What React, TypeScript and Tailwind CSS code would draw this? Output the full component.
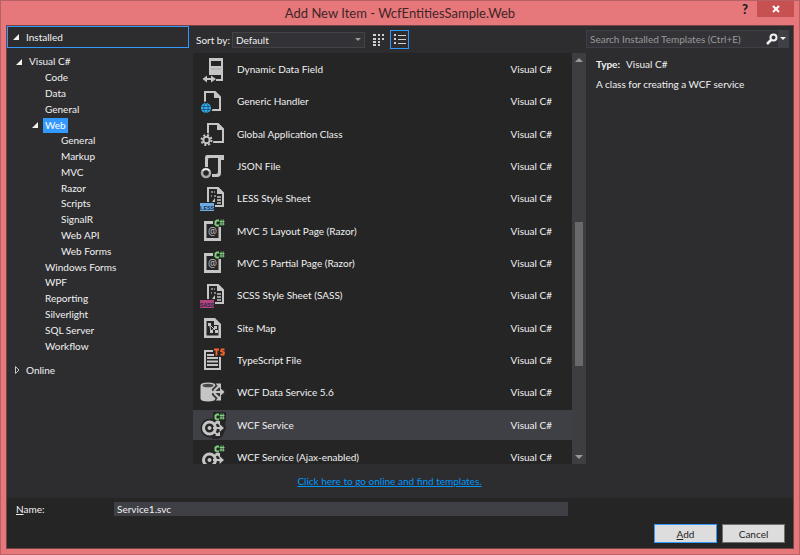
import React, { useState } from "react";

const INK = "#c5c5c5";
const BACK = "#252526";

function Page({ x, y }: { x: number; y: number }) {
  return (
    <g transform={`translate(${x} ${y})`}>
      <path d="M1 1h10l5 5v13H1z" fill={BACK} stroke={INK} strokeWidth="2" />
      <path d="M10 0l7 7h-7z" fill={INK} />
    </g>
  );
}

function CSharp() {
  return (
    <g fill="none" stroke="#7fd17f">
      <path d="M21 5.500h-2l-1.500 1v3l1.500 1h2" strokeWidth="2" />
      <path d="M21.500 6.500h5M21.500 9h5M23 4.500v6M25.200 4.500v6" />
    </g>
  );
}

function DynamicIcon() {
  return (
    <>
      <path fill={INK} fillRule="evenodd" d="M11 5h14v23h-7v-2h5v-4H11zM13 8v5h10V8z" />
      <path d="M13 16h10" stroke="#a5a5a5" />
      <path fill={INK} d="M4.500 26l4.500-3.500v2.500h4v-2.500l5 3.500-5 3.500v-2.500h-4v2.500z" />
    </>
  );
}

function HandlerIcon() {
  return (
    <>
      <Page x={6} y={6} />
      <circle cx="8" cy="23" r="6.500" fill={BACK} />
      <circle cx="8" cy="23" r="5" fill="#35b0f0" />
      <g fill="none" stroke="#1b4a6b" strokeWidth=".8">
        <ellipse cx="8" cy="23" rx="2.200" ry="4.500" />
        <path d="M3.500 21.500h9M3.500 24.500h9" />
      </g>
    </>
  );
}

function GlobalIcon() {
  return (
    <>
      <Page x={9} y={5} />
      <circle cx="8.500" cy="22" r="7" fill={BACK} />
      <circle cx="8.500" cy="22" r="3.200" fill="none" stroke={INK} strokeWidth="2" />
      <circle cx="8.500" cy="22" r="5" fill="none" stroke={INK} strokeWidth="2" strokeDasharray="2 1.927" />
    </>
  );
}

function JsonIcon() {
  return (
    <>
      <path fill={INK} d="M9 5h17v5h-3v13q0 4-4 4h-5v-3h4q2 0 2-2V8H11q-1 0-1 2v7H7V8q0-3 2-3z" />
      <circle cx="8" cy="23" r="6" fill={BACK} />
      <circle cx="8" cy="23" r="4" fill="none" stroke="#a8a8a8" strokeWidth="2.500" />
      <path d="M4.500 21a4 4 0 0 1 7 0" fill="none" stroke="#f1f1f1" strokeWidth="1.500" />
    </>
  );
}

function SheetIcon({ tag, color }: { tag: string; color: string }) {
  return (
    <>
      <Page x={9} y={5} />
      <path d="M13 9h2v2h-2zM16 9h1v2h-1zM13 13h1v2h-1zM16 13h2v2h-2z" fill={INK} opacity=".6" />
      <path d="M19 15h4M19 18h4M19 21h4" stroke={INK} strokeWidth="1.500" />
      <path d="M14 20l3-4v4z" fill={INK} />
      <rect x="1" y="20" width="16" height="10" fill={BACK} />
      <rect x="2" y="21" width="14" height="8" fill={color} />
      <text x="9" y="27.500" fontSize="6" fontWeight="700" textAnchor="middle" fill="#1b2b45" fontFamily="'Liberation Mono', monospace">
        {tag}
      </text>
    </>
  );
}

function RazorIcon() {
  return (
    <>
      <path fill={INK} fillRule="evenodd" d="M6 6h17v20H6zM8.500 9v14h12V9z" />
      <rect x="15" y="3" width="14" height="9" fill={BACK} />
      <CSharp />
      <text x="14.500" y="20" fontSize="10" textAnchor="middle" fill={INK} fontFamily="'Open Sans', sans-serif">
        @
      </text>
    </>
  );
}

function SiteMapIcon() {
  return (
    <>
      <path fill={INK} fillRule="evenodd" d="M6 6h11l6 6v14H6zM8.500 9v14.500h12V13H16V9z" />
      <path d="M10 11h3v3h-3zM12 18h3v3h-3zM17 18h3v3h-3zM16 14h3v3h-3z" fill={INK} />
      <path d="M11.500 12l1.500 7M12 13l7 7M13.500 19l4-4" stroke={INK} fill="none" />
    </>
  );
}

function TypeScriptIcon() {
  return (
    <>
      <path d="M15 7H7v18h15V13" fill="none" stroke={INK} strokeWidth="2" />
      <path d="M9 11h7M9 14h11M9 17.500h11M9 21h11" stroke={INK} strokeWidth="2" />
      <path d="M16 5.500h5M18.500 5v6.500M26.500 5.500H23.500L23 7l3 1.500-.5 2H22.500" fill="none" stroke="#f5642c" strokeWidth="1.800" />
    </>
  );
}

function DataServiceIcon() {
  return (
    <>
      <path d="M2.500 9.500v13q0 3 7.500 3t7.500-3v-13q0-3-7.500-3t-7.500 3z" fill={INK} />
      <ellipse cx="10" cy="9.500" rx="5.500" ry="1.800" fill="#4a4a4a" />
      <path d="M14 16h12M15.500 15l6-6M15.500 17l6 6" stroke="#3a3a3b" strokeWidth="5" />
      <path d="M14 16h9M16 15l5-5M16 17l5 5" stroke={INK} strokeWidth="2" />
      <path fill={INK} d="M22 12l4.500 4-4.500 4zM17.500 7.500h5.500v5.500zM17.500 24.500h5.500v-5.500z" />
    </>
  );
}

function ServiceIcon() {
  return (
    <>
      <circle cx="12" cy="19" r="9.500" fill={BACK} />
      <path d="M15 3h13v9l-1 3 1 4-4 9-4 2h-6z" fill={BACK} />
      <circle cx="11.500" cy="19" r="6" fill="none" stroke={INK} strokeWidth="3" />
      <circle cx="11.500" cy="19" r="2" fill={INK} />
      <path d="M15 19h8M16 15l4-2M16 23l4 3" stroke={INK} strokeWidth="2" />
      <path fill={INK} d="M21.500 15l4.500 4-4.500 4zM17 12h5v5zM17 27h5v-5z" />
      <CSharp />
    </>
  );
}

const templates: { name: string; icon: React.ReactNode }[] = [
  { name: "Dynamic Data Field", icon: <DynamicIcon /> },
  { name: "Generic Handler", icon: <HandlerIcon /> },
  { name: "Global Application Class", icon: <GlobalIcon /> },
  { name: "JSON File", icon: <JsonIcon /> },
  { name: "LESS Style Sheet", icon: <SheetIcon tag="LESS" color="#6cace4" /> },
  { name: "MVC 5 Layout Page (Razor)", icon: <RazorIcon /> },
  { name: "MVC 5 Partial Page (Razor)", icon: <RazorIcon /> },
  { name: "SCSS Style Sheet (SASS)", icon: <SheetIcon tag="SASS" color="#b3427c" /> },
  { name: "Site Map", icon: <SiteMapIcon /> },
  { name: "TypeScript File", icon: <TypeScriptIcon /> },
  { name: "WCF Data Service 5.6", icon: <DataServiceIcon /> },
  { name: "WCF Service", icon: <ServiceIcon /> },
  { name: "WCF Service (Ajax-enabled)", icon: <ServiceIcon /> },
];

const tree: { label: string; level: number; open?: boolean; selected?: boolean }[] = [
  { label: "Visual C#", level: 0, open: true },
  { label: "Code", level: 1 },
  { label: "Data", level: 1 },
  { label: "General", level: 1 },
  { label: "Web", level: 1, open: true, selected: true },
  { label: "General", level: 2 },
  { label: "Markup", level: 2 },
  { label: "MVC", level: 2 },
  { label: "Razor", level: 2 },
  { label: "Scripts", level: 2 },
  { label: "SignalR", level: 2 },
  { label: "Web API", level: 2 },
  { label: "Web Forms", level: 2 },
  { label: "Windows Forms", level: 1 },
  { label: "WPF", level: 1 },
  { label: "Reporting", level: 1 },
  { label: "Silverlight", level: 1 },
  { label: "SQL Server", level: 1 },
  { label: "Workflow", level: 1 },
];

const indents = ["pl-2", "pl-6", "pl-10"];

function Expanded() {
  return (
    <svg className="h-2 w-2 shrink-0" viewBox="0 0 8 8" aria-hidden="true">
      <path d="M7 1v6H1z" fill="#f1f1f1" />
    </svg>
  );
}

export default function App() {
  const [fileName, setFileName] = useState("Service1.svc");
  const [query, setQuery] = useState("");

  return (
    <div className="flex h-screen flex-col border border-[#b86063] bg-[#e6787b] px-[5px] pb-[5px] font-[Lato,'Open_Sans',sans-serif] text-[10px] leading-4 text-[#f1f1f1]">
      <header className="grid h-6 shrink-0 grid-cols-[1fr_auto_1fr] items-start">
        <span />
        <h1 className="text-[13px] leading-6 text-[#3f2528]">Add New Item - WcfEntitiesSample.Web</h1>
        <div className="flex justify-end">
          <button type="button" aria-label="Help" className="h-4 w-6 text-[13px] font-black leading-4 text-[#1e1e1e]">
            ?
          </button>
          <button type="button" aria-label="Close" className="flex h-4 w-[37px] items-center justify-center bg-[#c75050]">
            <svg className="h-2 w-2" viewBox="0 0 8 8" aria-hidden="true">
              <path d="M1 1l6 6M7 1L1 7" stroke="#fff" strokeWidth="2" />
            </svg>
          </button>
        </div>
      </header>

      <div className="flex min-h-0 flex-1 flex-col border border-[#7a4245] bg-[#2d2d30]">
        <main className="flex min-h-0 flex-1">
          <nav aria-label="Categories" className="flex w-[186px] shrink-0 flex-col">
            <button type="button" className="mr-1 flex h-[22px] shrink-0 items-center gap-1.5 border border-[#3399ff] px-1">
              <Expanded />
              <span>Installed</span>
            </button>
            <ul className="mt-1.5 grid h-[300px] shrink-0 grid-rows-[repeat(19,1fr)] leading-[15px]">
              {tree.map((node, i) => (
                <li key={i} className={`flex items-center ${indents[node.level]}`}>
                  <span className="flex w-3 shrink-0">{node.open && <Expanded />}</span>
                  <button
                    type="button"
                    className={node.selected ? "bg-[#3399ff] px-0.5 text-white" : "px-0.5"}
                  >
                    {node.label}
                  </button>
                </li>
              ))}
            </ul>
            <button type="button" className="mt-2 flex items-center gap-[5px] px-1.5">
              <svg className="h-2 w-2" viewBox="0 0 8 8" aria-hidden="true">
                <path d="M2.500 .500v7L6 4z" fill="none" stroke="#c5c5c5" />
              </svg>
              <span>Online</span>
            </button>
          </nav>

          <section className="flex min-w-0 flex-1 flex-col">
            <div className="flex h-[27px] shrink-0 items-center pl-[3px]">
              <label htmlFor="sort" className="w-9 whitespace-nowrap">
                Sort by:
              </label>
              <div className="relative">
                <select
                  id="sort"
                  className="block h-4 w-[133px] appearance-none border border-[#434346] bg-[#333337] pl-[3px] leading-3 text-[#f1f1f1]"
                >
                  <option>Default</option>
                </select>
                <svg className="pointer-events-none absolute right-1 top-1.5 h-1 w-1.5" viewBox="0 0 6 4" aria-hidden="true">
                  <path d="M0 0h6L3 3z" fill="#999" />
                </svg>
              </div>
              <button type="button" aria-label="Small icons" className="ml-1.5 flex h-5 w-4 items-center justify-center">
                <svg className="h-3.5 w-3" viewBox="0 0 12 14" aria-hidden="true">
                  <path
                    fill="#d0d0d0"
                    d="M0 1h3v2H0zM5 1h2v2H5zM9 1h2v2H9zM0 5h3v2H0zM5 5h2v2H5zM9 5h2v2H9zM0 8h3v2H0zM5 8h2v2H5zM0 11h3v2H0zM5 11h2v2H5z"
                  />
                </svg>
              </button>
              <button type="button" aria-label="List" aria-pressed="true" className="ml-[3px] flex h-[19px] w-[19px] items-center justify-center border border-[#3399ff]">
                <svg className="h-[13px] w-[13px]" viewBox="0 0 13 13" aria-hidden="true">
                  <path fill="#d0d0d0" d="M1 1h2v2H1zM1 5h2v2H1zM1 9h2v2H1zM5 2h8v1H5zM5 6h8v1H5zM5 10h8v1H5z" />
                </svg>
              </button>
            </div>

            <div className="flex min-h-0 flex-1">
              <div className="min-w-0 flex-1 overflow-hidden bg-[#252526]">
                <ul className="grid h-[420px] grid-rows-[repeat(13,1fr)]">
                  {templates.map((t) => (
                    <li key={t.name} className="flex items-center">
                      <button
                        type="button"
                        className={`flex h-[30px] w-full items-center pl-[5px] pr-5 text-left ${
                          t.name === "WCF Service" ? "bg-[#3f3f46]" : ""
                        }`}
                      >
                        <svg className="h-8 w-8 shrink-0" viewBox="0 0 32 32" aria-hidden="true">
                          {t.icon}
                        </svg>
                        <span className="ml-[7px] flex-1">{t.name}</span>
                        <span>Visual C#</span>
                      </button>
                    </li>
                  ))}
                </ul>
              </div>
              <div className="flex w-[14px] shrink-0 flex-col items-center bg-[#3e3e42] py-1" aria-hidden="true">
                <svg className="h-1.5 w-2 shrink-0" viewBox="0 0 8 6">
                  <path d="M0 5h8L4 1z" fill="#999" />
                </svg>
                <div className="flex w-2 flex-1 flex-col">
                  <div className="flex-[159]" />
                  <div className="flex-[143] bg-[#686868]" />
                  <div className="flex-[88]" />
                </div>
                <svg className="h-1.5 w-2 shrink-0" viewBox="0 0 8 6">
                  <path d="M0 1h8L4 5z" fill="#999" />
                </svg>
              </div>
            </div>

            <p className="flex h-[34px] shrink-0 items-center justify-center">
              <a href="#online" className="text-[#0097fb] underline">
                Click here to go online and find templates.
              </a>
            </p>
          </section>

          <aside className="w-[207px] shrink-0 pr-1 pt-1">
            <form className="flex h-[18px] items-center border border-[#3f3f46] bg-[#333337]" onSubmit={(e) => e.preventDefault()}>
              <input
                type="search"
                aria-label="Search Installed Templates"
                placeholder="Search Installed Templates (Ctrl+E)"
                value={query}
                onChange={(e) => setQuery(e.target.value)}
                className="h-4 min-w-0 flex-1 bg-transparent pl-[3px] outline-none placeholder:text-[#999999]"
              />
              <button type="submit" aria-label="Search" className="flex h-4 w-3 items-center justify-center">
                <svg className="h-3 w-3" viewBox="0 0 12 12" aria-hidden="true">
                  <circle cx="7.500" cy="4.500" r="3" fill="none" stroke="#f1f1f1" strokeWidth="2" />
                  <path d="M5.500 6.500L1 11" stroke="#f1f1f1" strokeWidth="2.500" />
                </svg>
              </button>
              <button type="button" aria-label="Search options" className="flex h-4 w-[10px] items-center justify-center bg-[#3f3f46]">
                <svg className="h-1 w-1.5" viewBox="0 0 6 4" aria-hidden="true">
                  <path d="M0 0h6L3 3z" fill="#f1f1f1" />
                </svg>
              </button>
            </form>
            <div className="pl-[10px] pt-2">
              <p className="flex gap-1.5">
                <strong>Type:</strong>
                <span>Visual C#</span>
              </p>
              <p className="mt-1">A class for creating a WCF service</p>
            </div>
          </aside>
        </main>

        <footer className="h-[50px] shrink-0 bg-[#252526] pr-2 pt-[3px]">
          <div className="flex items-center pl-[9px]">
            <label htmlFor="file-name" className="w-[98px]">
              <u>N</u>ame:
            </label>
            <input
              id="file-name"
              type="text"
              value={fileName}
              onChange={(e) => setFileName(e.target.value)}
              className="h-[14px] w-[59%] bg-[#3f3f46] px-[3px] outline-none"
            />
          </div>
          <div className="mt-[7px] flex justify-end gap-[5px] text-[#1e1e1e]">
            <button type="submit" className="h-[19px] w-[63px] border border-[#3399ff] bg-[#dddddd] leading-4">
              <u>A</u>dd
            </button>
            <button type="button" className="h-[19px] w-[63px] border border-[#707070] bg-[#dddddd] leading-4">
              Cancel
            </button>
          </div>
        </footer>
      </div>
    </div>
  );
}
